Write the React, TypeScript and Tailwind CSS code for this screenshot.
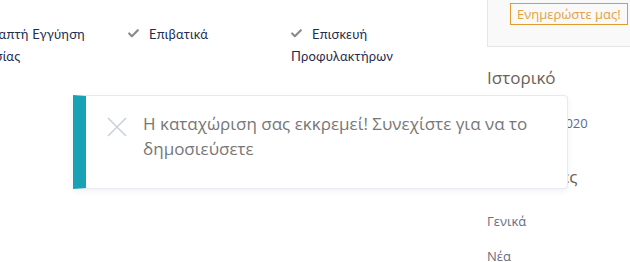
import { Check } from "lucide-react";

const features = [
  { label: "Γραπτή Εγγύηση Εργασίας" },
  { label: "Επιβατικά" },
  { label: "Επισκευή Προφυλακτήρων" },
];

function Feature({ label }: { label: string }) {
  return (
    <div className="w-[163px] shrink-0 pr-4 text-[13px] leading-[22px] text-[#1f2d4f] font-['Lato',sans-serif] tracking-[0.2px]">
      <span className="inline-block w-[21px] align-[-1px]">
        <Check className="w-[13px] h-[13px] -ml-[1px] text-[#8a8a8a]" strokeWidth={4} />
      </span>
      {label}
    </div>
  );
}

export default function App() {
  return (
    <div className="relative w-[630px] h-[262px] overflow-hidden bg-white font-['Open_Sans',sans-serif]">
      <div className="flex h-full">
        {/* main column */}
        <div className="w-[487px] shrink-0">
          <div className="flex ml-[-35px] pt-[23px]">
            {features.map((f) => (
              <Feature key={f.label} label={f.label} />
            ))}
          </div>
        </div>

        {/* sidebar */}
        <aside className="flex-1 min-w-0">
          <div className="-mr-10 h-[47px] bg-[#f9f9f9] border-l border-b border-[#e6e6e6] pl-[22px] pt-[3px]">
            <button className="block h-[22px] px-[6px] border border-[#e29a2d] text-[#e6a03c] text-[13px] leading-[18px] whitespace-nowrap">
              Ενημερώστε μας!
            </button>
          </div>
          <h3 className="mt-[19px] text-[17px] leading-[24px] text-[#6b5f5a]">Ιστορικό</h3>
          <p className="mt-[24px] text-[13px] leading-[18px] text-[#5b6c86] whitespace-nowrap">Οκτώβριος 2020</p>
          <h3 className="mt-[33px] text-[17px] leading-[24px] text-[#6b5f5a] whitespace-nowrap">Κατηγορίες</h3>
          <ul className="mt-[23px] text-[13px] leading-[18px] text-[#6b6b80] flex flex-col gap-[17px]">
            <li>Γενικά</li>
            <li>Νέα</li>
          </ul>
        </aside>
      </div>

      {/* pending listing toast */}
      <div className="absolute left-[73px] top-[95px] w-[495px] h-[94px] bg-white border border-[#e6e9f0] border-l-[13px] border-l-[#17a2b6] rounded-r-[4px] shadow-[0_2px_6px_rgba(0,0,0,0.06)] flex items-start pl-[21px] pr-[20px] pt-[15px]">
        <svg className="w-[20px] h-[20px] mt-[6px] shrink-0" viewBox="0 0 20 20" fill="none" stroke="#c9cfd9" strokeWidth="1.5">
          <path d="M1 1 L19 19 M19 1 L1 19" />
        </svg>
        <p className="ml-[16px] text-[17px] leading-[25px] text-[#777777]">
          Η καταχώριση σας εκκρεμεί! Συνεχίστε για να το δημοσιεύσετε
        </p>
      </div>
    </div>
  );
}
